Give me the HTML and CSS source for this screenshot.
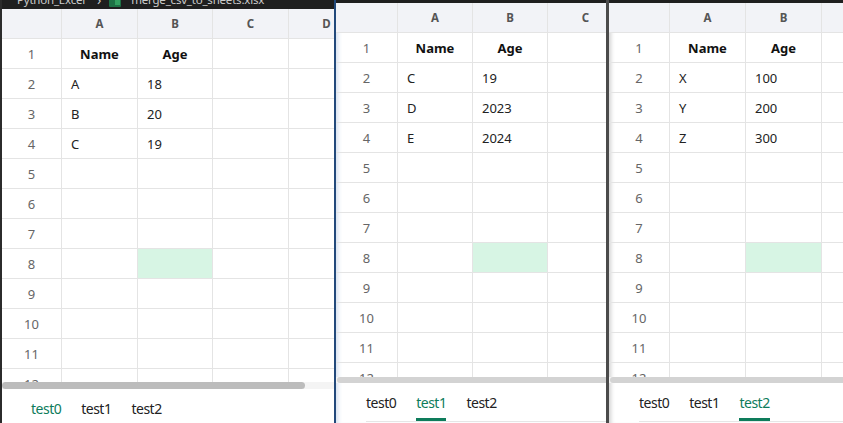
FILE: index.html
```html
<!DOCTYPE html>
<html>
<head>
<meta charset="utf-8">
<link rel="stylesheet" href="styles.css">
</head>
<body>
<div class="desk">
  <section class="win w1">
    <div class="titlebar">
      <div class="crumbs">
        <span>Python_Excel</span>
        <span class="chev">›</span>
        <svg class="xl" width="12" height="11" viewBox="0 0 12 11"><rect x="0" y="0" width="12" height="11" rx="1" fill="#1e7145"/><rect x="6" y="2" width="5" height="7" fill="#33a060"/></svg>
        <span>merge_csv_to_sheets.xlsx</span>
      </div>
    </div>
    <div class="viewport">
      <div class="grid g1">
        <div class="h"></div><div class="h">A</div><div class="h">B</div><div class="h">C</div><div class="h">D</div>
        <div class="rn">1</div><div class="b">Name</div><div class="b">Age</div><div></div><div></div>
        <div class="rn">2</div><div class="c">A</div><div class="c">18</div><div></div><div></div>
        <div class="rn">3</div><div class="c">B</div><div class="c">20</div><div></div><div></div>
        <div class="rn">4</div><div class="c">C</div><div class="c">19</div><div></div><div></div>
        <div class="rn">5</div><div></div><div></div><div></div><div></div>
        <div class="rn">6</div><div></div><div></div><div></div><div></div>
        <div class="rn">7</div><div></div><div></div><div></div><div></div>
        <div class="rn">8</div><div></div><div class="hl"></div><div></div><div></div>
        <div class="rn">9</div><div></div><div></div><div></div><div></div>
        <div class="rn">10</div><div></div><div></div><div></div><div></div>
        <div class="rn">11</div><div></div><div></div><div></div><div></div>
        <div class="rn">12</div><div></div><div></div><div></div><div></div>
      </div>
    </div>
    <div class="scroll s1"><div class="thumb"></div></div>
    <div class="tabs t1">
      <div class="tablist">
        <span class="tab on">test0</span><span class="tab">test1</span><span class="tab">test2</span>
      </div>
    </div>
  </section>
  <div class="sep blue"></div>
  <section class="win w2">
    <div class="viewport">
      <div class="grid g2">
        <div class="h"></div><div class="h">A</div><div class="h">B</div><div class="h">C</div>
        <div class="rn">1</div><div class="b">Name</div><div class="b">Age</div><div></div>
        <div class="rn">2</div><div class="c">C</div><div class="c">19</div><div></div>
        <div class="rn">3</div><div class="c">D</div><div class="c">2023</div><div></div>
        <div class="rn">4</div><div class="c">E</div><div class="c">2024</div><div></div>
        <div class="rn">5</div><div></div><div></div><div></div>
        <div class="rn">6</div><div></div><div></div><div></div>
        <div class="rn">7</div><div></div><div></div><div></div>
        <div class="rn">8</div><div></div><div class="hl"></div><div></div>
        <div class="rn">9</div><div></div><div></div><div></div>
        <div class="rn">10</div><div></div><div></div><div></div>
        <div class="rn">11</div><div></div><div></div><div></div>
        <div class="rn">12</div><div></div><div></div><div></div>
      </div>
    </div>
    <div class="scroll s2"><div class="thumb"></div></div>
    <div class="tabs">
      <div class="tablist">
        <span class="tab">test0</span><span class="tab on">test1</span><span class="tab">test2</span>
      </div>
    </div>
  </section>
  <div class="sep dark"></div>
  <section class="win w3">
    <div class="viewport">
      <div class="grid g3">
        <div class="h"></div><div class="h">A</div><div class="h">B</div><div class="h">C</div>
        <div class="rn">1</div><div class="b">Name</div><div class="b">Age</div><div></div>
        <div class="rn">2</div><div class="c">X</div><div class="c">100</div><div></div>
        <div class="rn">3</div><div class="c">Y</div><div class="c">200</div><div></div>
        <div class="rn">4</div><div class="c">Z</div><div class="c">300</div><div></div>
        <div class="rn">5</div><div></div><div></div><div></div>
        <div class="rn">6</div><div></div><div></div><div></div>
        <div class="rn">7</div><div></div><div></div><div></div>
        <div class="rn">8</div><div></div><div class="hl"></div><div></div>
        <div class="rn">9</div><div></div><div></div><div></div>
        <div class="rn">10</div><div></div><div></div><div></div>
        <div class="rn">11</div><div></div><div></div><div></div>
        <div class="rn">12</div><div></div><div></div><div></div>
      </div>
    </div>
    <div class="scroll s3"><div class="thumb"></div></div>
    <div class="tabs">
      <div class="tablist">
        <span class="tab">test0</span><span class="tab">test1</span><span class="tab on">test2</span>
      </div>
    </div>
  </section>
</div>
</body>
</html>
```

FILE: styles.css
```css
* { box-sizing: border-box; }
html, body { margin: 0; padding: 0; }
body {
  font-family: "Noto Sans", "Liberation Sans", sans-serif;
  background: #1f1f1f;
  width: 843px;
  height: 423px;
  overflow: hidden;
}
.desk {
  display: flex;
  width: 843px;
  height: 423px;
  overflow: hidden;
}
.win {
  display: flex;
  flex-direction: column;
  background: #fff;
  height: 423px;
  overflow: hidden;
  flex: none;
}
.w1 {
  width: 334px;
  border-left: 2px solid #2b2b2b;
}
.w2 {
  width: 270px;
  border-top: 3px solid #1f1f1f;
  box-shadow: inset 5px 0 4px -3px rgba(60, 110, 180, 0.22);
}
.w3 {
  flex: 1;
  border-top: 3px solid #1f1f1f;
  box-shadow: inset 5px 0 4px -3px rgba(0, 0, 0, 0.18);
}
.sep { flex: none; height: 423px; }
.sep.blue { width: 2px; background: #22497b; }
.sep.dark { width: 3px; background: #4b4b4b; }

/* title bar (only its lower edge visible) */
.titlebar {
  height: 9px;
  flex: none;
  background: #1f1f1f;
  overflow: hidden;
  margin-left: -2px;
}
.crumbs {
  display: flex;
  align-items: center;
  gap: 8px;
  padding-left: 17px;
  margin-top: -8px;
  height: 16px;
  color: #cccccc;
  font-size: 11.5px;
  line-height: 12px;
  letter-spacing: -0.2px;
  white-space: nowrap;
}
.crumbs .chev { font-size: 14px; margin: 0 0 0 4px; }
.crumbs .xl { flex: none; margin-top: 2px; margin-right: 2px; }

/* grid */
.viewport {
  height: 374px;
  overflow: hidden;
  flex: none;
}
.w1 .viewport { height: 373px; }
.grid {
  display: grid;
  grid-auto-rows: 30px;
  width: max-content;
}
.g1 { grid-template-columns: 60px 76px 75px 76px 76px; }
.g2 { grid-template-columns: 62px 75px 75px 76px; }
.g3 { grid-template-columns: 61px 76px 76px 76px; }
.grid > div {
  border-right: 1px solid #e4e4e4;
  border-bottom: 1px solid #e4e4e4;
  display: flex;
  align-items: center;
  font-size: 13px;
  color: #222;
  white-space: nowrap;
}
.grid > .h {
  background: #f2f3f7;
  justify-content: center;
  font-size: 11.5px;
  font-weight: 700;
  color: #555;
}
.grid > .rn {
  justify-content: center;
  color: #666;
}
.grid > .b {
  justify-content: center;
  font-weight: 700;
  color: #111;
}
.grid > .c { padding-left: 9px; }
.grid > .hl { background: #d7f5e4; }

/* scrollbars */
.scroll {
  flex: none;
  height: 6px;
  background: #f4f4f4;
}
.s1 { height: 7px; }
.thumb {
  height: 100%;
  background: #d3d3d3;
  border-radius: 3px 0 0 3px;
  margin-left: 1px;
}
.s1 .thumb {
  width: 303px;
  margin-left: 0;
  background: #bcbcbc;
  border-radius: 4px;
}

/* sheet tabs */
.tabs {
  flex: none;
  padding: 10px 0 0 30px;
}
.t1 { padding-left: 29px; }
.tablist {
  display: flex;
  gap: 20px;
  border-bottom: 1px solid #e6e6e6;
}
.tab {
  font-size: 14px;
  line-height: 20px;
  letter-spacing: -0.5px;
  color: #222;
  padding-bottom: 5px;
  border-bottom: 3px solid transparent;
}
.tab.on {
  color: #0e7c5b;
  border-bottom-color: #0e7c5b;
}
```
